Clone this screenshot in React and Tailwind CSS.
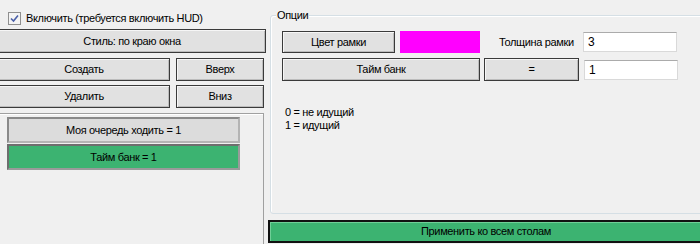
import React from "react";

/**
 * WinForms-like push button
 */
function Btn({ children, className = "" }) {
  return (
    <div className={`flex items-center justify-center border border-[#3a3a3a] bg-[#e1e1e1] shadow-[inset_1px_1px_0_#f6f6f6,inset_-1px_-1px_0_#bcbcbc] text-[11px] tracking-[-0.35px] text-black ${className}`}>
      {children}
    </div>
  );
}

function Field({ value, className = "" }) {
  return (
    <div className={`flex items-center bg-white border border-[#d9d9d9] border-t-[#ababab] pl-[4px] text-[12px] text-black ${className}`}>
      {value}
    </div>
  );
}

export default function App() {
  return (
    <div
      className="w-[700px] h-[244px] overflow-hidden bg-[#f0f0f0] flex text-black"
      style={{ fontFamily: '"Liberation Sans", Arial, sans-serif' }}
    >
      {/* left column */}
      <div className="w-[268px] shrink-0 flex flex-col">
        <div className="flex items-center h-[20px] mt-[8px] pl-[8px] gap-[5px]">
          <div className="w-[13px] h-[13px] border border-[#8f8f8f] bg-[#f4f4f4] flex items-center justify-center">
            <svg width="9" height="9" viewBox="0 0 9 9">
              <path d="M1 4.5 L3.5 7 L8 1.5" fill="none" stroke="#4a5fa8" strokeWidth="1.6" />
            </svg>
          </div>
          <span className="text-[11px] tracking-[-0.35px]">Включить (требуется включить HUD)</span>
        </div>

        <Btn className="h-[24px] mt-[1px] -ml-[2px] w-[268px]">Стиль: по краю окна</Btn>

        <div className="flex gap-[6px] mt-[5px] -ml-[2px]">
          <Btn className="h-[23px] w-[172px]">Создать</Btn>
          <Btn className="h-[23px] w-[88px]">Вверх</Btn>
        </div>
        <div className="flex gap-[6px] mt-[4px] -ml-[2px]">
          <Btn className="h-[23px] w-[172px]">Удалить</Btn>
          <Btn className="h-[23px] w-[88px]">Вниз</Btn>
        </div>

        <div className="flex-1 mt-[5px] -ml-[2px] w-[266px] border border-[#a0a0a0] shadow-[inset_1px_1px_0_#ffffff] border-b-0 pt-[3px] pl-[8px] flex flex-col gap-[1px]">
          <div className="w-[233px] h-[26px] flex items-center justify-center bg-[#dcdcdc] border-2 border-[#8a8a8a] border-r-[#b4b4b4] border-b-[#b4b4b4] text-[11px] tracking-[-0.35px]">
            Моя очередь ходить = 1
          </div>
          <div className="w-[233px] h-[26px] flex items-center justify-center bg-[#3cb371] border-2 border-[#6e6e6e] border-r-[#9a9a9a] border-b-[#9a9a9a] text-[11px] tracking-[-0.35px]">
            Тайм банк = 1
          </div>
        </div>
      </div>

      {/* right column */}
      <div className="flex-1 flex flex-col">
        <div className="relative mt-[15px] ml-[2px] -mr-[4px] h-[199px] border border-[#d5dfe5] shadow-[inset_1px_1px_0_#ffffff] rounded-[3px] pt-[15px] pl-[11px]">
          <span className="absolute -top-[8px] left-[5px] px-[1px] bg-[#f0f0f0] text-[11px] tracking-[-0.35px] leading-[14px]">Опции</span>

          <div className="flex items-center">
            <Btn className="w-[113px] h-[22px]">Цвет рамки</Btn>
            <div className="ml-[5px] w-[80px] h-[22px] bg-[#ff00ff]" />
            <span className="ml-[19px] w-[84px] text-[11px] tracking-[-0.35px]">Толщина рамки</span>
            <Field value="3" className="w-[94px] h-[20px]" />
          </div>
          <div className="flex items-center mt-[5px]">
            <Btn className="w-[198px] h-[23px]">Тайм банк</Btn>
            <Btn className="ml-[4px] w-[95px] h-[23px]">=</Btn>
            <Field value="1" className="ml-[5px] w-[94px] h-[20px]" />
          </div>

          <div className="mt-[25px] ml-[3px] text-[11px] tracking-[-0.35px] leading-[13px]">
            <div>0 = не идущий</div>
            <div>1 = идущий</div>
          </div>
        </div>

        <div className="mt-[6px] -mr-[4px] h-[23px] flex items-center justify-center bg-[#3cb371] border-2 border-[#111111] shadow-[inset_1px_1px_0_#6fcf97] text-[11px] tracking-[-0.35px]">
          Применить ко всем столам
        </div>
      </div>
    </div>
  );
}
